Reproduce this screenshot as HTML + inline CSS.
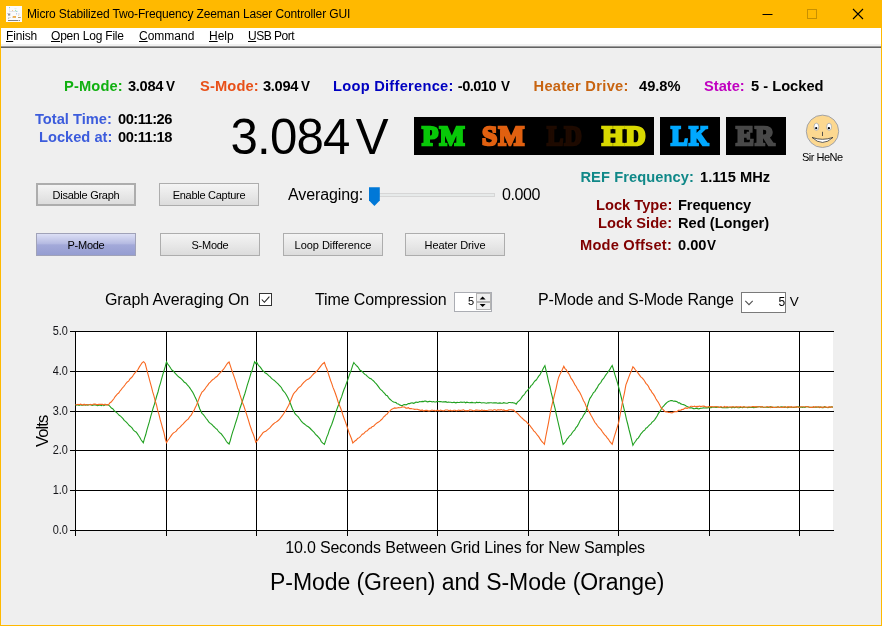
<!DOCTYPE html>
<html>
<head>
<meta charset="utf-8">
<title>Micro Stabilized Two-Frequency Zeeman Laser Controller GUI</title>
<style>
*{box-sizing:border-box;margin:0;padding:0}
html,body{width:882px;height:626px;overflow:hidden;background:#efefef}
body{font-family:"Liberation Sans",sans-serif;color:#000;position:relative}
#win{position:absolute;left:0;top:0;width:882px;height:626px;background:#efefef;border-left:1px solid #ffb900;border-right:1px solid #ffb900;border-bottom:1px solid #ffb900}
.abs{position:absolute;white-space:nowrap;line-height:1}
#titlebar{position:absolute;left:0;top:0;width:882px;height:28px;background:#ffb900}
#menubar{position:absolute;left:1px;top:28px;width:880px;height:16px;background:#fff}
#menuline1{position:absolute;left:1px;top:44px;width:880px;height:2px;background:#f1f1f1}
#menuline2{position:absolute;left:1px;top:46px;width:880px;height:2px;background:linear-gradient(#9c9c9c 50%,#626262 50%)}
.ttl{font-size:12px;top:8px;left:27px}
.menu{font-size:12px;top:30px}
.menu u{text-decoration:underline}
.lb{font-weight:bold;font-size:14.67px}
.btn{letter-spacing:-.27px;padding-top:.7px;position:absolute;height:23px;width:100px;border:1px solid #adadad;background:linear-gradient(#f4f4f4,#e6e6e6 60%,#dcdcdc);font-size:11px;text-align:center;line-height:21px;white-space:nowrap}
.reg{font-size:16px}
.ind{position:absolute;top:117px;height:38px;background:#000}
.st{position:absolute;font-family:"Liberation Serif",serif;font-weight:bold;font-size:27.500px;line-height:1;white-space:nowrap;top:121.500px;transform-origin:0 0;-webkit-text-stroke:2.5px currentColor;letter-spacing:1.2px}
.nv{display:inline-block;transform:scaleX(.92);transform-origin:0 50%}
</style>
</head>
<body>
<div id="root" style="position:absolute;left:0;top:0;width:882px;height:626px;will-change:transform">
<div id="win"></div>
<div id="titlebar"></div>
<div id="menubar"></div>
<div id="menuline1"></div>
<div id="menuline2"></div>

<!-- title bar -->
<svg class="abs" style="left:6px;top:6px" width="16" height="16" viewBox="0 0 16 16">
<rect x="0" y="0" width="16" height="16" fill="#fbfbfb"/>
<rect x="3" y="1.300" width="0.800" height="0.800" fill="#48b0c4"/>
<rect x="3.200" y="2.400" width="0.500" height="3" fill="#dcdce4"/>
<rect x="8.400" y="2.200" width="2.200" height="0.500" fill="#d8e0d8"/>
<rect x="3.200" y="5" width="8.500" height="0.600" fill="#d4d4dc"/>
<rect x="6" y="4.100" width="0.800" height="0.800" fill="#f0a868"/>
<rect x="9" y="3.900" width="0.900" height="0.900" fill="#88e088"/>
<rect x="10.100" y="4.900" width="1.200" height="0.700" fill="#68d0d4"/>
<rect x="1.200" y="7.200" width="3.200" height="0.600" fill="#a0a0b0"/>
<rect x="2" y="8.300" width="2.200" height="1.100" fill="#68686e"/>
<rect x="2" y="11" width="3" height="0.500" fill="#c4c4c8"/>
<rect x="2" y="12.100" width="1.200" height="0.700" fill="#a8a8ac"/>
<rect x="10.200" y="7.200" width="0.600" height="1.200" fill="#8894c4"/>
<rect x="12" y="7.400" width="1.600" height="1.200" fill="#ccd4ec"/>
<rect x="12.100" y="9.100" width="1.100" height="0.700" fill="#f8d468"/>
<rect x="6.800" y="10.200" width="3.200" height="1.500" fill="#e89a20"/>
<rect x="6.200" y="10.800" width="0.600" height="0.700" fill="#a0a0c0"/>
<rect x="12" y="11" width="2.800" height="0.800" fill="#a88448"/>
<rect x="2" y="14" width="10" height="0.900" fill="#74747c"/>
<rect x="12.600" y="14" width="1.300" height="0.900" fill="#74747c"/>
</svg>
<div class="abs ttl" style="letter-spacing:-.14px">Micro Stabilized Two-Frequency Zeeman Laser Controller GUI</div>
<svg class="abs" style="left:742px;top:0" width="140" height="28" viewBox="0 0 140 28">
<path d="M20.5 14.5h10" stroke="#000" stroke-width="1" fill="none"/>
<rect x="65.5" y="9.5" width="9" height="9" stroke="#c89000" stroke-width="1" fill="none"/>
<path d="M111 9l10 10M121 9l-10 10" stroke="#000" stroke-width="1.1" fill="none"/>
</svg>

<!-- menu -->
<div class="abs menu" style="left:6px;letter-spacing:-.15px"><u>F</u>inish</div>
<div class="abs menu" style="left:51px;letter-spacing:-.2px"><u>O</u>pen Log File</div>
<div class="abs menu" style="left:139px"><u>C</u>ommand</div>
<div class="abs menu" style="left:209px"><u>H</u>elp</div>
<div class="abs menu" style="left:248px;letter-spacing:-.5px"><u>U</u>SB Port</div>

<!-- status row -->
<div class="abs lb" id="t_pm" style="left:64px;top:78.600px;color:#10b010;letter-spacing:.14px">P-Mode:</div>
<div class="abs lb" id="v_pm" style="left:128px;top:78.600px;letter-spacing:-.3px;word-spacing:-.5px">3.084 <span class="nv">V</span></div>
<div class="abs lb" id="t_sm" style="left:200px;top:78.600px;color:#e85018;letter-spacing:.14px">S-Mode:</div>
<div class="abs lb" id="v_sm" style="left:264px;top:78.600px;margin-left:-1px;letter-spacing:-.3px;word-spacing:-1.100px">3.094 <span class="nv">V</span></div>
<div class="abs lb" id="t_ld" style="left:334px;top:78.600px;color:#0000c0;letter-spacing:.26px;margin-left:-1px">Loop Difference:</div>
<div class="abs lb" id="v_ld" style="left:457.800px;top:78.600px;letter-spacing:-.55px;word-spacing:1.800px">-0.010 <span class="nv">V</span></div>
<div class="abs lb" id="t_hd" style="left:533px;top:78.600px;color:#c86410;letter-spacing:.31px;margin-left:.5px">Heater Drive:</div>
<div class="abs lb" id="v_hd" style="left:639px;top:78.600px">49.8%</div>
<div class="abs lb" id="t_st" style="left:704px;top:78.600px;color:#c000c0">State:</div>
<div class="abs lb" id="v_st" style="left:751px;top:78.600px">5 - Locked</div>

<!-- times -->
<div class="abs lb" id="t_tt" style="left:35px;top:112px;color:#3c5cdc">Total Time:</div>
<div class="abs lb" id="v_tt" style="left:118px;top:112px;letter-spacing:-.5px">00:11:26</div>
<div class="abs lb" id="t_la" style="left:39px;top:130px;color:#3c5cdc">Locked at:</div>
<div class="abs lb" id="v_la" style="left:118px;top:130px;letter-spacing:-.5px">00:11:18</div>

<!-- big value -->
<div class="abs" id="big" style="left:230.500px;top:112px;font-size:49.200px;letter-spacing:-.8px">3.084</div>
<div class="abs" id="bigv" style="left:355.700px;top:112px;font-size:49.200px">V</div>

<!-- indicators -->
<div class="ind" style="left:414px;width:240px"></div>
<div class="ind" style="left:660px;width:60px"></div>
<div class="ind" style="left:726px;width:60px"></div>
<div class="st" id="i_pm" style="left:422px;transform:scaleX(0.97);color:#08c808">PM</div>
<div class="st" id="i_sm" style="left:482px;transform:scaleX(0.995);color:#e06010">SM</div>
<div class="st" id="i_ld" style="left:547px;transform:scaleX(0.885);color:#1e0a00">LD</div>
<div class="st" id="i_hd" style="left:601.5px;transform:scaleX(1.025);color:#d8d800">HD</div>
<div class="st" id="i_lk" style="left:671px;transform:scaleX(0.915);color:#00a8ff">LK</div>
<div class="st" id="i_er" style="left:736px;transform:scaleX(0.975);color:#484848">ER</div>

<!-- smiley -->
<svg class="abs" style="left:802px;top:111px" width="42" height="42" viewBox="802 111 42 42">
<circle cx="822.5" cy="131.3" r="16.2" fill="#fcd890" stroke="#8c94a8" stroke-width="0.8"/>
<ellipse cx="816.4" cy="126.8" rx="2.4" ry="3.6" fill="#fff" stroke="#8890a0" stroke-width="0.6"/>
<ellipse cx="829.1" cy="126.8" rx="2.4" ry="3.6" fill="#fff" stroke="#8890a0" stroke-width="0.6"/>
<circle cx="816.2" cy="128.2" r="1.1" fill="#000"/>
<circle cx="828.9" cy="128.2" r="1.1" fill="#000"/>
<path d="M822.5 131.8v4.2" stroke="#444" stroke-width="0.9"/>
<path d="M812 137.4Q822.5 141.2 833 137.4Q822.5 147.5 812 137.4Z" fill="#fff" stroke="#333" stroke-width="0.8"/>
</svg>
<div class="abs" id="sir" style="left:802px;top:151px;font-size:11px;letter-spacing:-.5px;margin-top:1px">Sir HeNe</div>

<!-- buttons -->
<div class="btn" id="b1" style="left:36px;top:183px;border:2px solid #adadad;line-height:19px">Disable Graph</div>
<div class="btn" id="b2" style="left:159px;top:183px">Enable Capture</div>
<div class="btn" id="b3" style="left:36px;top:233px;background:linear-gradient(#dcdff5,#b6bbe2 45%,#a3a9d9 52%,#959dd1);border-color:#a0a2b8">P-Mode</div>
<div class="btn" id="b4" style="left:160px;top:233px">S-Mode</div>
<div class="btn" id="b5" style="left:283px;top:233px;letter-spacing:-.04px">Loop Difference</div>
<div class="btn" id="b6" style="left:405px;top:233px;letter-spacing:-.07px">Heater Drive</div>

<!-- averaging slider -->
<div class="abs reg" id="avg" style="left:288px;top:187px;letter-spacing:-.1px">Averaging:</div>
<div class="abs" style="left:379px;top:193px;width:116px;height:4px;background:#e7eaea;border:1px solid #d6d6d6"></div>
<svg class="abs" style="left:368px;top:187px" width="13" height="20" viewBox="0 0 13 20"><path d="M1 0.200h10.800v13.400l-5.400 5.500l-5.400-5.500z" fill="#0078d7"/></svg>
<div class="abs reg" id="avgv" style="left:501px;top:187px;letter-spacing:-.4px;margin-left:1px">0.000</div>

<!-- right info -->
<div class="abs lb" id="t_rf" style="left:581px;top:170px;color:#108888;letter-spacing:.09px;margin-left:-.6px">REF Frequency:</div>
<div class="abs lb" id="v_rf" style="left:700px;top:170px">1.115 MHz</div>
<div class="abs lb" id="t_lt" style="left:596px;top:198px;color:#800000">Lock Type:</div>
<div class="abs lb" id="v_lt" style="left:678px;top:198px;letter-spacing:-.13px">Frequency</div>
<div class="abs lb" id="t_ls" style="left:598px;top:216px;color:#800000">Lock Side:</div>
<div class="abs lb" id="v_ls" style="left:678px;top:216px">Red (Longer)</div>
<div class="abs lb" id="t_mo" style="left:580px;top:238px;color:#800000;letter-spacing:.2px">Mode Offset:</div>
<div class="abs lb" id="v_mo" style="left:678px;top:238px;word-spacing:-3.2px">0.00 <span class="nv">V</span></div>

<!-- graph controls -->
<div class="abs reg" id="gao" style="left:105px;top:292px;letter-spacing:-.08px">Graph Averaging On</div>
<svg class="abs" style="left:259px;top:293px" width="13" height="13" viewBox="0 0 13 13"><rect x="0.5" y="0.5" width="12" height="12" fill="#fff" stroke="#333"/><path d="M2.8 6.5l2.6 2.8l5-5.6" stroke="#222" stroke-width="1.1" fill="none"/></svg>
<div class="abs reg" id="tc" style="left:315px;top:292px;letter-spacing:-.13px">Time Compression</div>
<div class="abs" style="left:454px;top:292px;width:38px;height:20px;background:#fff;border:1px solid #abadb3"></div>
<div class="abs" id="sp5" style="left:468px;top:295.500px;font-size:11px">5</div>
<svg class="abs" style="left:476px;top:293px" width="15" height="18" viewBox="0 0 15 18">
<rect x="0.5" y="0.5" width="14" height="8" fill="#f0f0f0" stroke="#b4b4b4"/>
<rect x="0.5" y="9.5" width="14" height="7" fill="#f0f0f0" stroke="#b4b4b4"/>
<path d="M3.600 6.400l3-3l3 3z" fill="#000"/><path d="M3.600 11l3 3l3-3z" fill="#000"/>
</svg>
<div class="abs reg" id="rng" style="left:538px;top:292px;letter-spacing:-.15px">P-Mode and S-Mode Range</div>
<div class="abs" style="left:741px;top:292px;width:45px;height:21px;background:#fff;border:1px solid #7a7a7a"></div>
<svg class="abs" style="left:744px;top:299px" width="10" height="7" viewBox="0 0 10 7"><path d="M1.300 1.900l3.700 3.700l3.700-3.700" stroke="#505050" stroke-width="1.100" fill="none"/></svg>
<div class="abs" id="cb5" style="left:778.500px;top:295.700px;font-size:12px">5</div>
<div class="abs" id="rv" style="left:789.700px;top:294.500px;font-size:13.500px">V</div>

<!-- chart -->
<svg class="abs" id="chart" style="left:0;top:320px" width="882" height="230" viewBox="0 320 882 230">
<rect x="75" y="331" width="758" height="200" fill="#fff"/>
<g stroke="#000" stroke-width="1" fill="none" shape-rendering="crispEdges">
<path d="M70 331.5H834M70 371.5H834M70 411.5H834M70 450.5H834M70 490.5H834M70 530.5H834"/>
<path d="M75.500 331V536M166.500 331V536M256.500 331V536M347.500 331V536M437.500 331V536M528.500 331V536M618.500 331V536M709.500 331V536M799.500 331V536"/>
</g>
<g font-family="Liberation Sans, sans-serif" font-size="12" fill="#141418" text-anchor="end">
<text x="67.900" y="335" textLength="15.2" lengthAdjust="spacingAndGlyphs">5.0</text><text x="67.900" y="375" textLength="15.2" lengthAdjust="spacingAndGlyphs">4.0</text><text x="67.900" y="415" textLength="15.2" lengthAdjust="spacingAndGlyphs">3.0</text><text x="67.900" y="454" textLength="15.2" lengthAdjust="spacingAndGlyphs">2.0</text><text x="67.900" y="494" textLength="15.2" lengthAdjust="spacingAndGlyphs">1.0</text><text x="67.900" y="534" textLength="15.2" lengthAdjust="spacingAndGlyphs">0.0</text>
</g>
<polyline id="green" fill="none" stroke="#20a020" stroke-width="1.100" points="75.5,405.2 76.7,405.0 78.0,404.9 79.2,405.4 80.4,404.8 81.6,405.2 82.9,405.1 84.1,404.8 85.3,405.2 86.6,404.7 87.8,405.1 89.0,404.8 90.3,404.8 91.5,405.1 92.7,405.5 93.9,404.8 95.2,404.9 96.4,405.3 97.6,405.6 98.9,405.3 100.1,405.1 101.3,405.7 102.6,404.7 103.8,405.6 105.0,405.0 106.2,404.8 107.5,404.8 108.7,405.2 110.0,406.3 111.4,408.0 112.7,408.7 114.0,410.3 115.3,411.6 116.7,412.6 118.0,414.0 119.2,415.3 120.5,416.1 121.8,417.3 123.0,418.7 124.2,420.4 125.5,421.4 126.8,422.6 128.0,424.0 129.3,425.5 130.7,426.7 132.0,427.9 133.3,429.8 134.6,431.1 136.0,432.0 137.3,433.6 138.5,435.5 139.7,437.3 140.9,439.5 142.1,441.2 143.3,442.8 144.5,438.3 145.7,434.8 147.0,429.6 148.2,425.7 149.4,421.7 150.6,416.9 151.8,412.9 153.1,408.2 154.3,404.6 155.5,400.4 156.7,396.0 158.0,392.0 159.2,387.2 160.4,383.3 161.6,378.9 162.8,374.7 164.1,370.3 165.3,366.4 166.5,361.8 167.9,364.4 169.3,366.0 170.7,368.3 172.1,370.3 173.5,371.1 174.8,373.0 176.2,374.3 177.6,375.9 178.9,377.0 180.3,378.0 181.6,379.1 183.0,380.6 184.3,382.2 185.7,382.9 187.1,384.7 188.4,386.0 189.8,387.9 191.2,390.0 192.6,392.1 194.0,394.7 195.3,397.6 196.5,400.0 197.8,403.3 199.7,408.7 202.0,413.3 203.4,414.7 204.8,416.5 206.2,418.5 207.6,420.1 208.9,422.2 210.3,423.4 211.6,424.2 212.9,425.7 214.3,427.0 215.6,428.4 216.9,429.2 218.2,431.0 219.6,432.6 220.9,433.5 222.2,435.2 223.6,437.0 224.9,438.8 226.3,441.3 227.6,442.8 229.1,444.0 230.3,440.5 231.5,435.8 232.7,431.9 234.0,428.1 235.2,424.1 236.4,420.5 237.6,416.7 238.8,412.4 240.0,408.2 241.2,404.7 242.5,400.8 243.7,397.0 244.9,393.5 246.1,389.3 247.3,385.2 248.5,381.4 249.7,377.6 251.0,373.0 252.2,369.9 253.4,365.9 254.6,361.7 255.8,363.5 256.6,362.2 257.8,364.3 259.0,365.9 260.3,367.2 261.5,368.9 262.7,370.7 264.0,371.4 265.2,373.0 266.5,373.5 267.7,374.6 269.0,375.9 270.3,376.9 271.5,378.4 272.8,379.4 274.0,380.2 275.3,381.3 276.6,382.6 277.8,383.7 279.1,385.1 280.3,386.4 281.5,387.7 282.7,390.2 284.0,391.7 285.2,393.0 286.4,395.0 287.8,397.5 289.1,400.4 290.5,403.7 292.5,409.0 293.8,411.2 295.0,413.7 296.6,415.3 298.1,416.7 299.6,418.8 301.1,420.8 302.6,422.6 304.1,423.8 305.5,424.9 306.9,426.1 308.3,426.8 309.8,428.0 311.2,429.5 312.6,430.9 314.1,432.3 315.5,434.3 316.9,435.5 318.4,437.1 319.9,438.8 321.3,441.6 322.8,443.1 324.4,444.3 325.6,440.9 326.8,437.1 328.1,434.1 329.3,430.2 330.5,427.3 331.8,424.3 333.0,420.8 334.2,417.2 335.4,413.4 336.6,410.1 337.9,406.5 339.1,403.7 340.3,400.0 341.6,396.9 342.8,393.0 344.0,389.5 345.2,386.7 346.4,383.4 347.7,379.9 348.9,376.4 350.1,373.0 351.4,369.6 352.6,365.6 353.8,362.5 355.0,364.0 356.2,365.4 357.4,366.5 358.6,368.0 359.8,370.0 361.1,370.8 362.3,371.7 363.6,373.2 364.8,374.4 366.1,374.9 367.3,376.4 368.6,377.4 369.8,378.4 371.1,378.8 372.3,379.9 373.6,381.0 374.8,382.4 376.1,383.7 377.3,385.1 378.6,386.9 379.8,388.6 381.1,389.9 382.3,390.9 383.6,392.5 384.8,393.7 386.0,395.2 387.3,395.8 388.5,397.6 389.7,399.0 391.0,400.1 392.2,401.1 393.5,402.0 394.7,402.3 396.0,402.6 397.2,403.8 398.5,404.0 399.7,405.1 401.0,405.4 402.2,405.6 403.5,404.8 404.7,404.5 406.0,404.8 407.2,404.3 408.5,403.5 409.7,403.6 410.9,403.0 412.2,402.8 413.4,403.3 414.7,402.9 415.9,402.0 417.2,402.4 418.4,402.3 419.7,401.6 420.9,401.7 422.2,401.4 423.4,401.6 424.7,401.1 425.9,401.0 427.2,401.9 428.4,401.6 429.7,401.4 430.9,401.5 432.2,401.9 433.4,401.5 434.7,402.0 435.9,402.0 437.2,401.4 438.4,401.5 439.7,401.6 440.9,401.6 442.1,402.0 443.4,401.7 444.6,401.9 445.9,401.7 447.1,402.5 448.4,402.0 449.6,402.2 450.9,402.3 452.1,402.7 453.4,402.3 454.6,402.4 455.8,402.8 457.1,402.4 458.3,402.5 459.5,402.5 460.7,402.0 462.0,402.4 463.2,402.2 464.4,402.0 465.6,402.8 466.9,402.2 468.1,402.5 469.3,402.8 470.6,402.6 471.8,402.4 473.0,402.6 474.2,402.7 475.5,402.9 476.7,402.2 477.9,402.7 479.1,402.4 480.4,402.5 481.6,403.0 482.8,402.7 484.0,402.8 485.3,403.0 486.5,403.2 487.7,402.7 489.0,402.9 490.2,402.8 491.4,402.8 492.6,403.0 493.9,402.8 495.1,402.9 496.3,402.8 497.5,403.3 498.8,403.1 500.0,402.9 501.2,403.3 502.5,403.3 503.7,402.7 505.0,403.0 506.2,403.3 507.5,403.2 508.7,402.5 510.0,402.5 511.2,402.8 512.5,402.5 513.7,402.9 515.0,403.2 516.2,404.1 517.5,402.1 518.7,401.2 520.0,399.8 521.2,398.3 522.5,396.1 523.7,395.1 525.0,393.5 526.2,391.4 527.5,390.6 528.7,388.7 529.9,387.6 531.2,385.4 532.4,384.6 533.7,382.5 534.9,381.0 536.2,380.0 537.4,378.3 538.7,376.1 539.9,374.9 541.1,372.5 542.4,370.3 543.6,367.8 544.9,365.7 546.1,370.7 547.4,376.1 548.6,381.8 549.9,386.4 551.1,392.2 552.4,397.4 553.7,403.2 555.1,408.6 556.4,414.8 557.8,421.0 559.1,426.7 560.4,432.1 561.8,438.9 563.1,444.3 564.4,443.0 565.7,441.5 567.0,439.1 568.3,437.6 569.6,435.8 570.9,434.9 572.2,432.8 573.5,431.0 574.8,429.8 576.0,427.6 577.3,426.1 578.5,423.9 579.8,421.2 581.0,419.1 582.3,417.8 583.5,415.3 584.8,413.4 586.0,411.1 587.3,406.5 588.5,402.3 589.8,398.6 591.0,396.9 592.3,394.8 593.5,392.6 594.8,391.6 596.0,389.4 597.3,387.7 598.5,385.1 599.8,383.7 601.0,382.3 602.3,379.7 603.5,378.7 604.8,376.5 606.0,374.6 607.3,373.0 608.5,371.2 609.7,369.7 611.0,367.2 612.2,365.5 613.5,369.5 614.8,374.3 616.1,378.4 617.4,382.6 618.7,387.4 620.0,392.3 621.3,397.5 622.6,402.9 623.9,408.3 625.2,413.5 626.4,419.2 627.7,424.0 629.0,429.5 630.3,434.5 631.6,439.9 632.9,445.3 634.2,443.0 635.6,441.3 636.9,439.2 638.2,438.1 639.5,436.1 640.9,433.8 642.2,432.3 643.4,431.0 644.7,430.2 645.9,428.2 647.2,427.6 648.4,426.0 649.6,424.8 650.9,423.9 652.1,422.2 653.4,421.1 654.6,419.8 655.9,417.9 657.1,416.1 658.4,413.4 659.6,411.9 660.9,409.7 662.1,407.4 663.4,406.3 664.6,404.8 665.9,403.5 667.1,402.4 668.4,401.5 669.6,401.1 670.9,400.6 672.1,400.6 673.4,401.2 674.6,401.1 675.9,401.4 677.1,401.7 678.4,402.9 679.6,402.9 680.8,403.9 682.1,404.3 683.3,404.6 684.5,405.1 685.8,405.8 687.0,406.6 688.3,406.9 689.5,407.9 690.8,407.9 692.0,407.8 693.2,408.6 694.5,408.7 695.8,408.4 697.0,408.2 698.2,409.0 699.5,408.6 700.8,408.3 702.1,408.2 703.4,407.7 704.8,408.0 706.1,407.9 707.4,407.9 708.7,407.4 710.0,407.6 711.2,407.6 712.4,407.1 713.6,407.3 714.8,407.1 716.1,407.4 717.3,407.1 718.5,407.0 719.7,407.3 720.9,407.2 722.1,407.6 723.3,407.5 724.5,407.7 725.8,407.6 727.0,407.6 728.2,407.8 729.4,407.3 730.6,407.2 731.8,407.9 733.0,407.0 734.2,407.6 735.5,407.5 736.7,406.9 737.9,407.7 739.1,407.7 740.3,407.4 741.5,407.5 742.7,407.6 743.9,406.9 745.2,407.3 746.4,407.2 747.6,407.6 748.8,407.5 750.0,407.2 751.2,407.5 752.4,407.3 753.7,407.6 754.9,407.4 756.1,407.4 757.3,406.9 758.5,406.7 759.8,406.8 761.0,407.1 762.2,406.8 763.4,407.5 764.6,407.3 765.9,407.3 767.1,407.3 768.3,407.4 769.5,407.2 770.7,406.7 772.0,407.5 773.2,407.4 774.4,407.2 775.6,407.2 776.8,407.4 778.0,406.8 779.3,407.4 780.5,407.0 781.7,406.8 782.9,407.0 784.1,407.4 785.4,406.9 786.6,407.4 787.8,407.7 789.0,407.2 790.2,407.1 791.5,407.2 792.7,407.4 793.9,407.5 795.1,407.3 796.3,407.3 797.6,406.8 798.8,406.8 800.0,407.2 801.2,407.0 802.4,407.4 803.7,407.0 804.9,407.3 806.1,406.7 807.3,406.8 808.6,407.0 809.8,407.4 811.0,407.4 812.2,407.4 813.4,407.0 814.7,407.2 815.9,407.2 817.1,407.2 818.3,406.8 819.6,407.6 820.8,406.9 822.0,407.7 823.2,407.6 824.4,406.7 825.7,407.2 826.9,407.5 828.1,407.7 829.3,407.1 830.6,407.0 831.8,406.9 833.0,407.2"/>
<polyline id="orange" fill="none" stroke="#f86820" stroke-width="1.100" points="75.5,404.6 76.7,405.0 78.0,404.3 79.2,404.7 80.4,404.2 81.6,404.6 82.9,405.1 84.1,404.2 85.3,404.9 86.6,404.6 87.8,405.0 89.0,404.8 90.3,404.3 91.5,405.0 92.7,404.6 93.9,404.1 95.2,404.1 96.4,404.6 97.6,404.6 98.9,404.4 100.1,404.2 101.3,404.4 102.6,404.4 103.8,404.9 105.0,404.1 106.2,404.9 107.5,404.9 108.7,404.6 110.0,402.7 111.2,402.0 112.5,400.3 113.7,399.0 115.0,396.8 116.2,395.4 117.5,393.9 118.7,393.0 120.0,391.0 121.2,389.6 122.4,388.0 123.7,386.6 124.9,385.0 126.1,383.3 127.3,381.9 128.6,381.2 129.8,379.2 131.0,378.0 132.4,376.7 133.8,374.3 135.2,372.7 136.6,371.2 138.0,369.5 139.4,366.9 140.8,364.8 142.2,362.6 143.6,361.7 145.2,363.5 146.5,368.6 147.7,373.2 149.0,377.8 150.2,382.3 151.5,387.2 152.7,391.9 154.0,396.2 155.2,401.0 156.5,405.0 157.7,410.3 159.0,414.7 160.2,419.7 161.5,424.2 162.7,428.5 164.0,432.9 165.2,438.5 166.5,442.7 167.9,440.2 169.3,438.5 170.7,436.3 172.1,434.4 173.5,432.9 174.8,432.1 176.2,431.1 177.6,429.1 178.9,428.2 180.3,426.8 181.6,425.3 183.0,424.2 184.3,422.7 185.7,421.2 187.1,419.9 188.4,418.9 189.8,416.5 191.2,415.1 192.6,412.5 194.0,410.4 195.3,407.5 196.5,405.2 197.8,401.9 199.7,396.7 202.0,392.1 203.4,390.8 204.8,389.2 206.2,387.0 207.6,385.4 208.9,383.4 210.3,382.2 211.6,380.7 212.9,379.5 214.3,378.6 215.6,377.2 216.9,376.5 218.2,374.8 219.6,373.3 220.9,372.2 222.2,370.6 223.6,369.2 224.9,367.2 226.3,365.0 227.6,363.2 229.1,362.0 230.3,365.6 231.5,369.3 232.7,372.8 234.0,376.4 235.2,379.8 236.4,383.7 237.6,388.0 238.8,390.8 240.0,394.9 241.2,398.6 242.4,402.5 243.7,405.5 244.9,409.2 246.1,412.8 247.3,416.6 248.5,420.3 249.7,424.5 250.9,428.0 252.2,431.7 253.4,434.5 254.6,438.2 255.8,442.3 257.0,440.9 258.3,439.4 259.5,437.3 260.7,435.8 262.0,434.1 263.2,432.5 264.5,431.8 265.8,431.3 267.1,430.1 268.3,429.1 269.6,428.1 270.9,426.6 272.2,425.2 273.4,424.0 274.7,422.9 276.0,422.1 277.3,421.2 278.5,420.3 279.8,418.8 281.0,417.3 282.3,415.6 283.5,414.0 284.7,412.0 285.9,410.4 287.3,407.8 288.7,405.2 290.1,402.0 292.2,396.8 293.4,394.1 294.7,392.3 296.2,390.9 297.8,388.6 299.3,387.2 300.8,386.1 302.3,384.2 303.8,382.4 305.0,381.3 306.2,380.2 307.4,379.4 308.6,378.9 309.8,378.0 311.0,376.9 312.5,375.0 313.9,373.5 315.4,372.5 316.9,371.0 318.3,369.3 319.8,367.3 321.3,365.3 322.8,363.7 324.4,362.5 325.6,366.1 326.9,369.0 328.1,372.8 329.3,376.5 330.6,380.5 331.8,383.6 333.0,387.4 334.3,390.5 335.5,393.7 336.7,397.2 338.0,401.5 339.2,404.7 340.5,407.8 341.7,411.0 342.9,415.0 344.2,418.7 345.4,421.9 346.6,425.3 347.9,429.2 349.1,432.9 350.3,435.7 351.6,439.0 352.8,443.0 354.0,441.8 355.2,440.8 356.4,440.0 357.6,438.4 358.8,437.9 360.0,436.8 361.2,435.5 362.4,434.1 363.6,433.8 364.8,432.3 366.1,431.2 367.3,430.8 368.6,429.2 369.8,428.3 371.1,427.9 372.3,426.5 373.6,426.2 374.8,424.8 376.1,423.6 377.3,422.7 378.6,422.0 379.8,421.1 381.0,420.0 382.3,419.0 383.5,417.0 384.8,416.0 386.0,414.6 387.2,414.1 388.5,412.0 389.7,411.1 390.9,409.9 392.2,409.1 393.4,408.6 394.7,407.9 395.9,408.1 397.2,408.0 398.4,407.6 399.7,407.7 400.9,407.5 402.2,406.9 403.4,407.0 404.7,407.1 405.9,408.1 407.2,408.1 408.4,407.7 409.7,408.6 410.9,408.5 412.2,408.8 413.4,409.0 414.7,409.4 415.9,409.2 417.2,409.2 418.4,409.6 419.7,409.9 420.9,410.6 422.2,409.9 423.4,410.9 424.7,410.6 425.9,410.3 427.1,410.4 428.3,410.9 429.6,410.9 430.8,410.5 432.0,410.1 433.2,410.5 434.4,410.4 435.6,410.9 436.8,410.2 438.1,410.4 439.3,410.9 440.5,410.0 441.7,410.4 442.9,410.8 444.1,410.7 445.3,410.0 446.6,410.0 447.8,410.0 449.0,410.9 450.2,410.2 451.4,410.7 452.6,410.8 453.8,410.2 455.1,410.2 456.3,410.8 457.5,410.5 458.7,410.1 459.9,410.6 461.1,410.2 462.4,410.1 463.6,409.8 464.8,410.6 466.0,410.7 467.2,410.5 468.4,410.8 469.6,409.8 470.9,410.0 472.1,410.3 473.3,410.7 474.5,410.7 475.7,410.1 476.9,410.0 478.1,410.2 479.4,410.2 480.6,410.7 481.8,409.9 483.0,410.5 484.2,410.4 485.4,410.5 486.6,410.5 487.9,410.3 489.1,410.0 490.3,410.0 491.5,410.0 492.7,410.4 493.9,409.7 495.1,409.8 496.4,410.4 497.6,409.9 498.8,409.7 500.0,410.1 501.2,409.6 502.5,410.2 503.7,409.9 505.0,410.6 506.2,410.5 507.5,410.6 508.7,409.9 510.0,409.7 511.2,409.7 512.5,410.1 513.7,410.1 515.0,411.5 516.2,412.4 517.5,413.3 518.7,414.7 520.0,416.1 521.2,417.3 522.5,418.5 523.7,419.8 525.0,420.8 526.2,421.4 527.5,423.3 528.7,424.1 529.9,425.5 531.2,427.4 532.4,428.8 533.7,430.8 534.9,431.9 536.2,433.5 537.4,435.1 538.7,436.6 539.9,438.6 541.4,440.9 542.9,442.5 544.4,444.3 545.7,437.0 547.1,429.9 548.4,423.4 549.8,415.7 551.1,408.6 552.4,403.1 553.6,398.5 554.9,393.2 556.1,388.3 557.4,382.2 558.6,377.4 559.9,374.6 561.2,372.1 562.5,369.3 563.8,366.2 565.0,368.6 566.2,369.7 567.4,371.9 568.7,373.6 569.9,375.7 571.1,378.4 572.3,379.9 573.5,382.1 574.8,384.6 576.0,386.2 577.3,388.8 578.5,390.6 579.8,392.5 581.0,394.9 582.3,397.9 583.5,400.8 584.8,402.7 586.0,406.0 587.3,408.6 588.5,411.0 589.8,412.9 591.0,415.3 592.3,417.4 593.5,419.7 594.8,422.3 596.0,423.6 597.3,425.5 598.5,427.1 599.8,428.3 601.0,429.6 602.2,431.5 603.5,433.4 604.7,434.8 606.0,436.1 607.2,437.8 608.5,439.3 609.7,441.4 611.0,442.8 612.2,444.3 613.5,439.5 614.8,435.1 616.1,431.0 617.4,426.8 618.7,422.3 620.1,415.0 621.6,406.9 623.0,399.5 624.5,392.6 625.9,384.9 627.3,381.2 628.7,377.4 630.1,373.8 631.5,370.8 632.9,366.7 634.2,368.1 635.5,370.0 636.8,371.4 638.1,373.1 639.5,375.1 640.8,376.9 642.1,377.8 643.4,379.3 644.7,381.2 645.9,383.3 647.2,384.6 648.4,386.3 649.7,389.1 650.9,390.4 652.1,392.7 653.4,394.1 654.6,396.1 655.9,398.7 657.1,400.6 658.4,402.5 659.6,404.7 660.9,407.4 662.1,408.6 663.4,409.8 664.6,411.2 665.9,411.9 667.1,411.7 668.4,412.4 669.6,412.4 670.9,412.7 672.1,412.9 673.4,412.1 674.6,411.8 675.9,411.6 677.1,411.6 678.4,410.3 679.6,410.3 680.9,410.1 682.1,409.4 683.3,409.5 684.6,408.3 685.8,407.9 687.0,408.3 688.3,407.9 689.5,407.1 690.8,406.2 692.0,406.3 693.2,406.7 694.5,406.2 695.8,406.7 697.0,406.4 698.2,406.6 699.5,406.0 700.8,406.6 702.0,406.3 703.3,406.1 704.7,406.4 706.0,406.9 707.3,407.0 708.7,406.5 710.0,406.9 711.2,406.6 712.4,406.8 713.6,406.9 714.8,406.8 716.1,406.5 717.3,406.7 718.5,407.1 719.7,407.3 720.9,406.5 722.1,407.0 723.3,407.2 724.5,406.5 725.8,407.3 727.0,406.6 728.2,407.0 729.4,407.0 730.6,407.1 731.8,406.8 733.0,406.9 734.2,407.0 735.5,406.9 736.7,407.1 737.9,406.9 739.1,406.9 740.3,406.5 741.5,407.1 742.7,407.0 743.9,406.7 745.2,407.3 746.4,407.3 747.6,407.0 748.8,406.7 750.0,407.0 751.2,407.0 752.4,406.6 753.7,406.6 754.9,406.9 756.1,406.6 757.3,406.9 758.5,407.0 759.8,406.5 761.0,407.1 762.2,406.6 763.4,407.2 764.6,407.3 765.9,407.0 767.1,406.6 768.3,407.0 769.5,406.9 770.7,407.5 772.0,406.6 773.2,407.4 774.4,407.5 775.6,407.2 776.8,407.3 778.0,406.7 779.3,407.5 780.5,407.0 781.7,407.5 782.9,407.4 784.1,406.7 785.4,407.3 786.6,407.4 787.8,406.6 789.0,406.9 790.2,407.3 791.5,406.7 792.7,407.4 793.9,406.8 795.1,407.3 796.3,406.6 797.6,407.0 798.8,407.4 800.0,407.0 801.2,406.7 802.4,406.8 803.7,407.0 804.9,406.8 806.1,406.5 807.3,406.7 808.6,406.7 809.8,407.4 811.0,407.2 812.2,407.4 813.4,406.7 814.7,407.3 815.9,406.6 817.1,407.0 818.3,407.1 819.6,406.9 820.8,407.4 822.0,407.1 823.2,407.1 824.4,407.4 825.7,406.6 826.9,407.5 828.1,407.1 829.3,406.9 830.6,407.3 831.8,406.8 833.0,407.0"/>
</svg>
<div class="abs" id="volts" style="left:34px;top:447px;font-size:16.500px;letter-spacing:-.9px;transform-origin:0 0;transform:rotate(-90deg)">Volts</div>
<div class="abs reg" id="xl" style="left:286px;top:540px;letter-spacing:-.18px;margin-left:-.8px">10.0 Seconds Between Grid Lines for New Samples</div>
<div class="abs" id="ttl2" style="left:270px;top:571px;font-size:23px;letter-spacing:-.06px">P-Mode (Green) and S-Mode (Orange)</div>
</div>
</body>
</html>
